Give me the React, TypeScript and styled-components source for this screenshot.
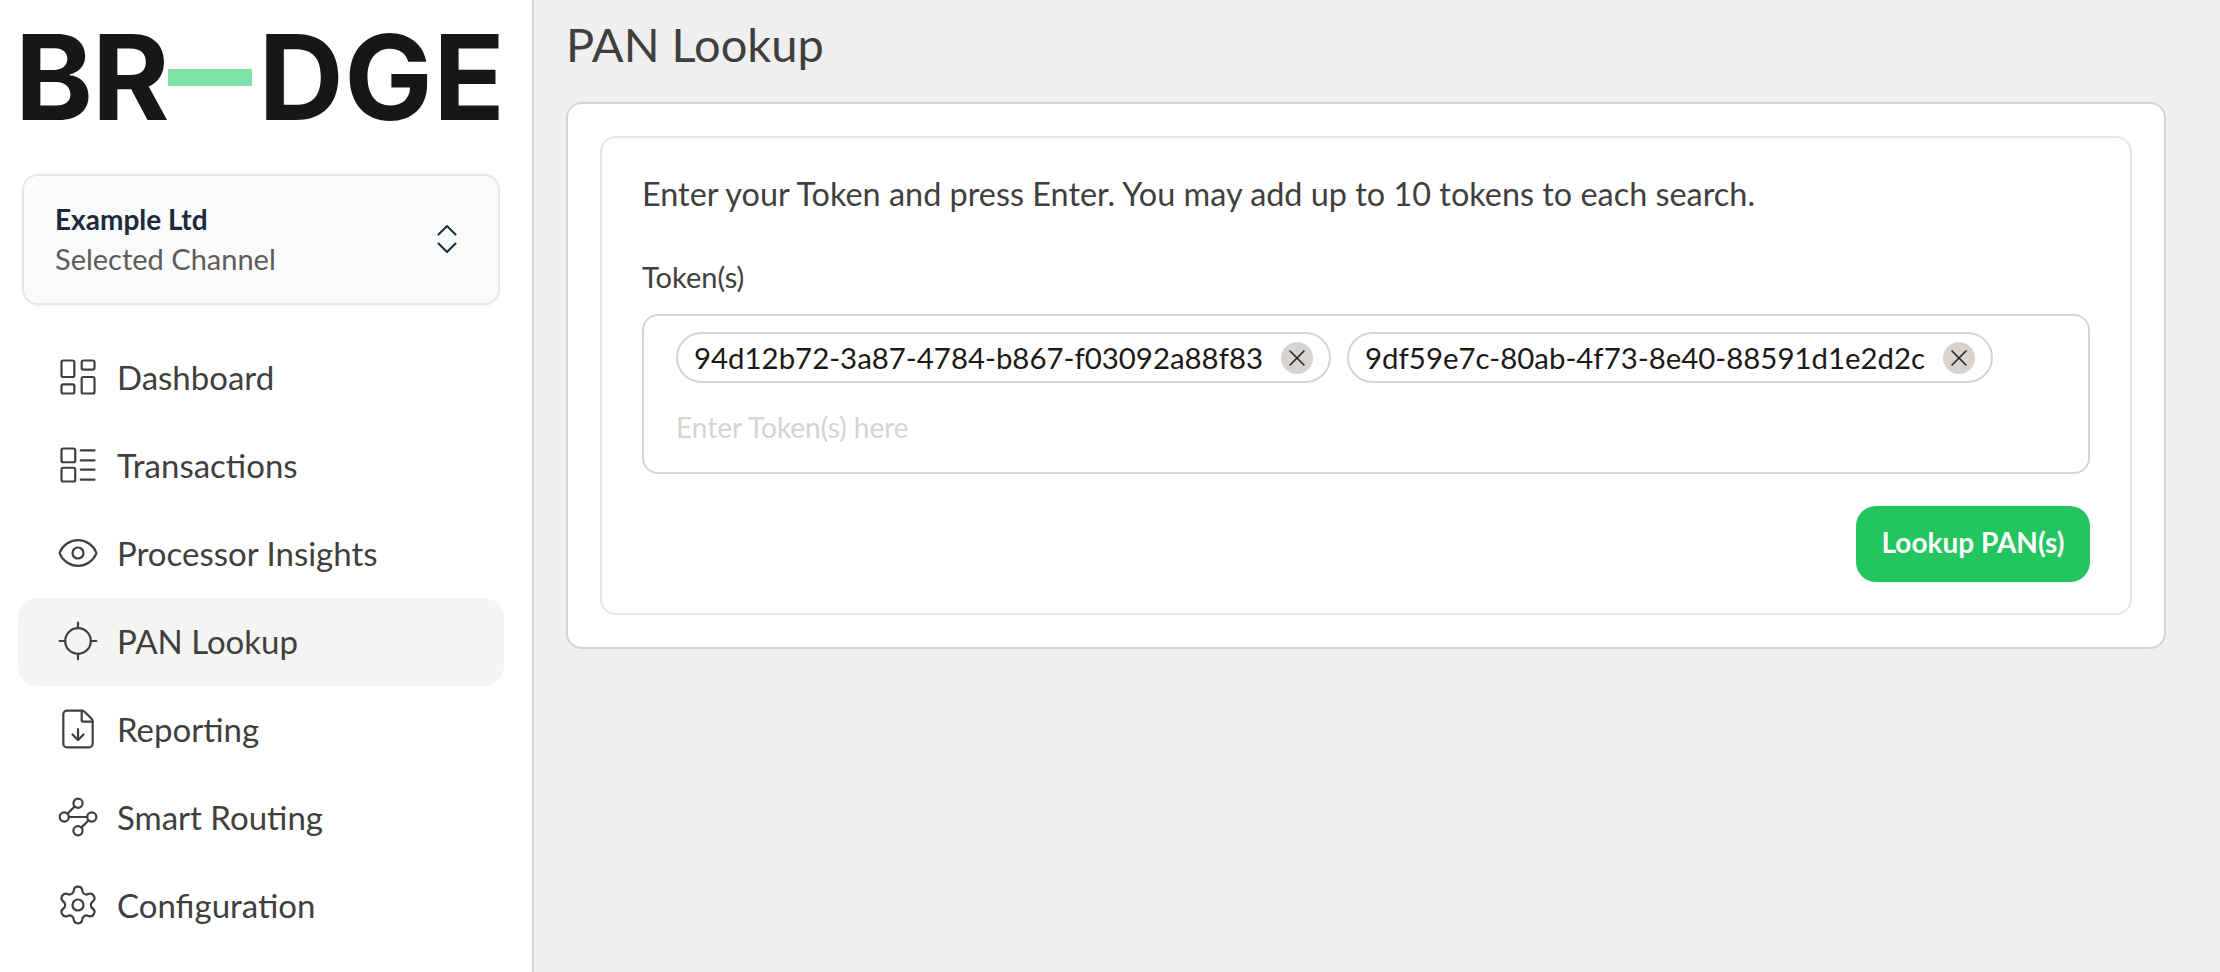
import React from 'react';
import styled, { createGlobalStyle } from 'styled-components';
import { Eye, FileDown, LayoutDashboard, Locate, Settings, X } from 'lucide-react';

const GlobalStyle = createGlobalStyle`
  html, body {
    margin: 0;
    padding: 0;
    height: 100%;
  }
  body {
    font-family: 'Lato', 'Liberation Sans', sans-serif;
    background: #efefef;
    color: #3f3f3e;
  }
  * {
    box-sizing: border-box;
  }
`;

const Page = styled.div`
  display: flex;
  width: 2220px;
  height: 972px;
  overflow: hidden;
`;

const Sidebar = styled.aside`
  width: 534px;
  flex-shrink: 0;
  background: #fff;
  border-right: 2px solid #d6d3d1;
  padding: 35px 28px 0 18px;
`;

const Logo = styled.div`
  display: flex;
  align-items: center;
  height: 85px;
  margin-left: -3px;
  font-family: 'Inter', 'Liberation Sans', sans-serif;
  font-weight: 700;
  font-size: 118px;
  line-height: 85px;
  color: #171716;
`;

const LogoText = styled.span<{ $spacing: number }>`
  display: block;
  letter-spacing: ${props => props.$spacing}px;
`;

const LogoBar = styled.span`
  display: block;
  flex-shrink: 0;
  width: 84px;
  height: 17px;
  margin: 0 7px 0 -1px;
  background: #7fe2a9;
`;

const ChannelSelect = styled.div`
  display: flex;
  align-items: center;
  justify-content: space-between;
  width: 478px;
  height: 131px;
  margin: 54px 0 29px 4px;
  padding: 0 41px 2px 31px;
  background: #f8fafc;
  border: 2px solid #e5e7eb;
  border-radius: 16px;
  box-shadow: 0 1px 3px rgba(0, 0, 0, 0.06);
`;

const ChannelText = styled.div`
  display: flex;
  flex-direction: column;
  gap: 8px;
`;

const ChannelName = styled.div`
  font-size: 28px;
  line-height: 32px;
  font-weight: 700;
  color: #1e293b;
`;

const ChannelHint = styled.div`
  font-size: 29px;
  line-height: 32px;
  color: #5f5c58;
`;

const Nav = styled.nav`
  display: flex;
  flex-direction: column;
`;

const NavItem = styled.div<{ $active?: boolean }>`
  display: flex;
  align-items: center;
  gap: 17px;
  height: 88px;
  padding: 0 0 2px 38px;
  border-radius: 20px;
  font-size: 33px;
  color: #3f3f3e;
  background: ${props => (props.$active ? '#f4f4f2' : 'transparent')};

  svg {
    flex-shrink: 0;
    width: 44px;
    height: 44px;
  }
`;

const Main = styled.main`
  flex: 1;
  padding: 14px 54px 0 32px;
`;

const Title = styled.h1`
  margin: 0 0 28px;
  font-size: 47px;
  line-height: 60px;
  font-weight: 400;
  color: #3f3f3e;
`;

const OuterCard = styled.section`
  width: 1600px;
  padding: 32px;
  background: #fff;
  border: 2px solid #d6d3d1;
  border-radius: 16px;
`;

const InnerCard = styled.div`
  padding: 34px 40px 31px;
  border: 2px solid #e5e7eb;
  border-radius: 16px;
`;

const Intro = styled.p`
  margin: 0 0 43px;
  font-size: 32.4px;
  line-height: 44px;
  color: #3f3f3e;
`;

const FieldLabel = styled.div`
  margin-bottom: 19px;
  font-size: 29px;
  line-height: 36px;
  color: #3f3f3e;
`;

const TokenField = styled.div`
  display: flex;
  flex-direction: column;
  height: 160px;
  padding: 16px 32px;
  border: 2px solid #d1d5db;
  border-radius: 16px;
`;

const ChipRow = styled.div`
  display: flex;
  gap: 16px;
`;

const Chip = styled.div`
  display: flex;
  align-items: center;
  gap: 18px;
  height: 51px;
  padding: 0 16px;
  border: 2px solid #d6d3d1;
  border-radius: 26px;
  font-size: 29.4px;
  color: #1c1917;
`;

const ChipRemove = styled.button`
  display: flex;
  align-items: center;
  justify-content: center;
  width: 32px;
  height: 32px;
  padding: 0;
  border: 0;
  border-radius: 50%;
  background: #d6d3d1;
  color: #292524;
`;

const Placeholder = styled.div`
  margin-top: 26px;
  font-size: 28px;
  line-height: 36px;
  color: #d6d3d1;
`;

const Actions = styled.div`
  display: flex;
  justify-content: flex-end;
  margin-top: 32px;
`;

const LookupButton = styled.button`
  width: 234px;
  height: 76px;
  padding: 0 0 4px;
  border: 0;
  border-radius: 20px;
  background: #22c55e;
  color: #fff;
  font-family: inherit;
  font-size: 28px;
  font-weight: 700;
`;

const TransactionsIcon = () => (
  <svg viewBox="0 0 24 24" fill="none" stroke="currentColor" strokeWidth="1.2" strokeLinecap="round" strokeLinejoin="round">
    <rect x="3" y="3" width="7.5" height="7.5" rx="1" />
    <rect x="3" y="13.5" width="7.5" height="7.5" rx="1" />
    <path d="M13.5 4h7.5M13.5 9.5h7.5M13.5 14.5h7.5M13.5 20h7.5" />
  </svg>
);

const RoutingIcon = () => (
  <svg viewBox="0 0 24 24" fill="none" stroke="currentColor" strokeWidth="1.2" strokeLinecap="round" strokeLinejoin="round">
    <circle cx="12" cy="4.5" r="2.5" />
    <circle cx="4.5" cy="12" r="2.5" />
    <circle cx="19.5" cy="12" r="2.5" />
    <circle cx="12" cy="19.5" r="2.5" />
    <path d="M7 12h10M10.2 6.2 6.2 10.2M17.8 13.8l-4 4" />
  </svg>
);

const UpDownIcon = () => (
  <svg width="20" height="30" viewBox="0 0 20 30" fill="none" stroke="#1e293b" strokeWidth="2" strokeLinecap="round" strokeLinejoin="round">
    <path d="M1.5 10.5 10 2l8.5 8.5M1.5 19.5 10 28l8.5-8.5" />
  </svg>
);

const navItems = [
  { label: 'Dashboard', icon: <LayoutDashboard strokeWidth={1.2} /> },
  { label: 'Transactions', icon: <TransactionsIcon /> },
  { label: 'Processor Insights', icon: <Eye strokeWidth={1.2} /> },
  { label: 'PAN Lookup', icon: <Locate strokeWidth={1.2} />, active: true },
  { label: 'Reporting', icon: <FileDown strokeWidth={1.2} /> },
  { label: 'Smart Routing', icon: <RoutingIcon /> },
  { label: 'Configuration', icon: <Settings strokeWidth={1.2} /> },
];

const tokens = [
  '94d12b72-3a87-4784-b867-f03092a88f83',
  '9df59e7c-80ab-4f73-8e40-88591d1e2d2c',
];

const App: React.FC = () => (
  <>
    <GlobalStyle />
    <Page>
      <Sidebar>
        <Logo>
          <LogoText $spacing={-1}>BR</LogoText>
          <LogoBar />
          <LogoText $spacing={0.5}>DGE</LogoText>
        </Logo>
        <ChannelSelect>
          <ChannelText>
            <ChannelName>Example Ltd</ChannelName>
            <ChannelHint>Selected Channel</ChannelHint>
          </ChannelText>
          <UpDownIcon />
        </ChannelSelect>
        <Nav>
          {navItems.map(item => (
            <NavItem key={item.label} $active={item.active}>
              {item.icon}
              {item.label}
            </NavItem>
          ))}
        </Nav>
      </Sidebar>
      <Main>
        <Title>PAN Lookup</Title>
        <OuterCard>
          <InnerCard>
            <Intro>Enter your Token and press Enter. You may add up to 10 tokens to each search.</Intro>
            <FieldLabel>Token(s)</FieldLabel>
            <TokenField>
              <ChipRow>
                {tokens.map(token => (
                  <Chip key={token}>
                    {token}
                    <ChipRemove>
                      <X size={28} strokeWidth={1.3} />
                    </ChipRemove>
                  </Chip>
                ))}
              </ChipRow>
              <Placeholder>Enter Token(s) here</Placeholder>
            </TokenField>
            <Actions>
              <LookupButton>Lookup PAN(s)</LookupButton>
            </Actions>
          </InnerCard>
        </OuterCard>
      </Main>
    </Page>
  </>
);

export default App;
